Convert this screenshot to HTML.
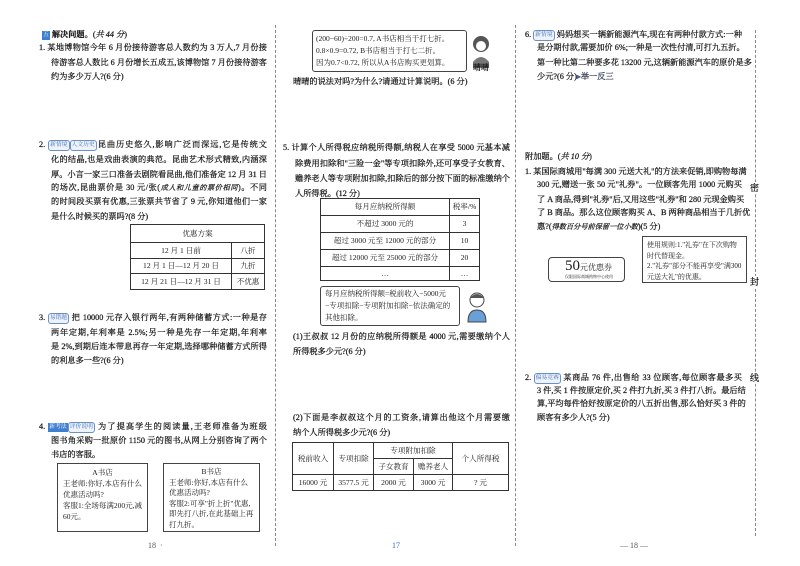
<!DOCTYPE html>
<html><head><meta charset="utf-8">
<style>
*{margin:0;padding:0;box-sizing:border-box}
body{width:800px;height:566px;background:#fff;position:relative;overflow:hidden;font-family:"Liberation Serif","Noto Serif CJK SC","Noto Sans CJK SC",serif;color:#1a1a1a;font-size:10px}
.l{position:absolute;white-space:nowrap;line-height:12px;font-size:8.2px;-webkit-text-stroke:0.25px #1a1a1a}
.j{text-align:justify;text-align-last:justify}
.s{font-size:7.2px}
.tag{display:inline-block;border:1px solid #6a8fc9;border-radius:3px;color:#3b6cb7;font-size:5.8px;line-height:9px;padding:0 1px;vertical-align:1px;background:#eef3fb;-webkit-text-stroke:0}
.tagb{display:inline-block;background:#3f7fcf;color:#fff;font-size:5.8px;line-height:9px;padding:0 1px;vertical-align:1px;-webkit-text-stroke:0}
.dl{position:absolute;top:25px;bottom:20px;border-left:1px dashed #888}
table{position:absolute;border-collapse:collapse;font-size:7.6px}
td{border:1px solid #333;text-align:center;padding:0;white-space:nowrap}
.box{position:absolute;border:1px solid #444;font-size:8px;line-height:11px;padding:3px 5px}
.pn{position:absolute;font-size:8px;color:#555}
</style></head><body>
<div class="dl" style="left:275px"></div>
<div class="dl" style="left:515px"></div>
<div class="dl" style="left:755px;top:30px;bottom:30px"></div>
<div class="l" style="left:750px;top:182px;font-size:9px;background:#fff">密</div>
<div class="l" style="left:750px;top:276px;font-size:9px;background:#fff">封</div>
<div class="l" style="left:750px;top:372px;font-size:9px;background:#fff">线</div>

<!-- column 1 -->
<div class="l" style="left:42px;top:29px"><span class="tagb">五</span> <b>解决问题。</b>(<i>共 44 分</i>)</div>
<div class="l j" style="left:39px;top:42px;width:228px">1. 某地博物馆今年 6 月份接待游客总人数约为 3 万人,7 月份接</div>
<div class="l j" style="left:51px;top:57px;width:216px">待游客总人数比 6 月份增长五成五,该博物馆 7 月份接待游客</div>
<div class="l" style="left:51px;top:71px">约为多少万人?(6 分)</div>

<div class="l j" style="left:39px;top:139px;width:228px">2. <span class="tag">新情境</span><span class="tag">人文历史</span>昆曲历史悠久,影响广泛而深远,它是传统文</div>
<div class="l j" style="left:51px;top:154px;width:216px">化的结晶,也是戏曲表演的典范。昆曲艺术形式精致,内涵深</div>
<div class="l j" style="left:51px;top:169px;width:216px">厚。小言一家三口准备去剧院看昆曲,他们准备定 12 月 31 日</div>
<div class="l j" style="left:51px;top:182px;width:216px">的场次,昆曲票价是 30 元/张(<i class="s">成人和儿童的票价相同</i>)。不同</div>
<div class="l j" style="left:51px;top:196px;width:216px">的时间段买票有优惠,三张票共节省了 9 元,你知道他们一家</div>
<div class="l" style="left:51px;top:211px">是什么时候买的票吗?(8 分)</div>
<table style="left:130px;top:224px;width:135px;height:66px">
<tr><td colspan="2" style="height:18px">优惠方案</td></tr>
<tr><td>12 月 1 日前</td><td style="width:33px">八折</td></tr>
<tr><td>12 月 1 日—12 月 20 日</td><td>九折</td></tr>
<tr><td>12 月 21 日—12 月 31 日</td><td>不优惠</td></tr>
</table>

<div class="l j" style="left:39px;top:312px;width:228px">3. <span class="tag">易错题</span> 把 10000 元存入银行两年,有两种储蓄方式:一种是存</div>
<div class="l j" style="left:51px;top:327px;width:216px">两年定期,年利率是 2.5%;另一种是先存一年定期,年利率</div>
<div class="l j" style="left:51px;top:341px;width:216px">是 2%,到期后连本带息再存一年定期,选择哪种储蓄方式所得</div>
<div class="l" style="left:51px;top:355px">的利息多一些?(6 分)</div>

<div class="l j" style="left:39px;top:421px;width:228px">4. <span class="tagb">新考法</span><span class="tag">评价说明</span> 为了提高学生的阅读量,王老师准备为班级</div>
<div class="l j" style="left:51px;top:435px;width:216px">图书角采购一批原价 1150 元的图书,从网上分别咨询了两个</div>
<div class="l" style="left:51px;top:449px">书店的客服。</div>
<div class="box" style="left:57px;top:463px;width:91px;height:69px;font-size:7.5px"><div style="text-align:center">A书店</div>王老师:你好,本店有什么优惠活动吗?<br>客服1:全场每满200元,减60元。</div>
<div class="box" style="left:163px;top:463px;width:97px;height:69px;font-size:7.5px;line-height:10.5px"><div style="text-align:center">B书店</div>王老师:你好,本店有什么优惠活动吗?<br>客服2:可享"折上折"优惠,即先打八折,在此基础上再打九折。</div>
<div class="pn" style="left:148px;top:541px">18 &nbsp;·</div>

<!-- column 2 -->
<div class="box" style="left:312px;top:30px;width:155px;height:42px;line-height:12px;padding:2px 3px;border-radius:3px;font-size:7.5px;white-space:nowrap">(200−60)÷200=0.7, A书店相当于打七折。<br>0.8×0.9=0.72, B书店相当于打七二折。<br>因为0.7&lt;0.72, 所以从A书店购买更划算。</div>
<svg style="position:absolute;left:468px;top:32px" width="26" height="40"><circle cx="13" cy="12" r="8" fill="#555"/><circle cx="13" cy="14" r="5" fill="#fff"/><path d="M5 30 Q13 20 21 30 L21 36 L5 36Z" fill="#777"/></svg>
<div class="l" style="left:473px;top:62px;font-size:8px">晴晴</div>
<div class="l" style="left:293px;top:76px">晴晴的说法对吗?为什么?请通过计算说明。(6 分)</div>

<div class="l j" style="left:283px;top:142px;width:227px">5. 计算个人所得税应纳税所得额,纳税人在享受 5000 元基本减</div>
<div class="l j" style="left:295px;top:158px;width:215px">除费用扣除和"三险一金"等专项扣除外,还可享受子女教育、</div>
<div class="l j" style="left:295px;top:173px;width:215px">赡养老人等专项附加扣除,扣除后的部分按下面的标准缴纳个</div>
<div class="l" style="left:295px;top:188px">人所得税。(12 分)</div>
<table style="left:320px;top:198px;width:160px;height:83px">
<tr><td>每月应纳税所得额</td><td style="width:30px">税率/%</td></tr>
<tr><td>不超过 3000 元的</td><td>3</td></tr>
<tr><td>超过 3000 元至 12000 元的部分</td><td>10</td></tr>
<tr><td>超过 12000 元至 25000 元的部分</td><td>20</td></tr>
<tr><td>…</td><td>…</td></tr>
</table>
<div class="box" style="left:320px;top:286px;width:140px;height:40px;line-height:12px;padding:1px 4px;border-radius:3px;font-size:7.5px">每月应纳税所得额=税前收入−5000元−专项扣除−专项附加扣除−依法确定的其他扣除。</div>
<svg style="position:absolute;left:464px;top:290px" width="26" height="34"><circle cx="13" cy="10" r="7" fill="#fff" stroke="#444"/><path d="M6 8 Q13 0 20 8" fill="#555"/><path d="M4 32 Q4 20 13 20 Q22 20 22 32Z" fill="#6aa0d8" stroke="#444"/></svg>
<div class="l j" style="left:293px;top:331px;width:217px">(1)王叔叔 12 月份的应纳税所得额是 4000 元,需要缴纳个人</div>
<div class="l" style="left:293px;top:346px">所得税多少元?(6 分)</div>
<div class="l j" style="left:293px;top:412px;width:217px">(2)下面是李叔叔这个月的工资条,请算出他这个月需要缴</div>
<div class="l" style="left:293px;top:427px">纳个人所得税多少元?(6 分)</div>
<table style="left:292px;top:442px;width:217px;height:49px">
<tr><td rowspan="2" style="width:41px">税前收入</td><td rowspan="2" style="width:40px">专项扣除</td><td colspan="2">专项附加扣除</td><td rowspan="2">个人所得税</td></tr>
<tr><td style="width:40px">子女教育</td><td style="width:39px">赡养老人</td></tr>
<tr><td>16000 元</td><td>3577.5 元</td><td>2000 元</td><td>3000 元</td><td>? 元</td></tr>
</table>
<div class="pn" style="left:392px;top:541px;color:#3b6cb7">17</div>

<!-- column 3 -->
<div class="l j" style="left:525px;top:29px;width:217px">6. <span class="tag">新情境</span> 妈妈想买一辆新能源汽车,现在有两种付款方式:一种</div>
<div class="l j" style="left:537px;top:42px;width:205px">是分期付款,需要加价 6%;一种是一次性付清,可打九五折。</div>
<div class="l j" style="left:537px;top:57px;width:205px">第一种比第二种要多花 13200 元,这辆新能源汽车的原价是多</div>
<div class="l" style="left:537px;top:71px">少元?(6 分)<span style="color:#3b6cb7">▸举一反三</span></div>

<div class="l" style="left:525px;top:151px">附加题。(<i>共 10 分</i>)</div>
<div class="l j" style="left:525px;top:166px;width:217px">1. 某国际商城用"每满 300 元送大礼"的方法来促销,即购物每满</div>
<div class="l j" style="left:537px;top:179px;width:205px">300 元,赠送一张 50 元"礼券"。一位顾客先用 1000 元购买</div>
<div class="l j" style="left:537px;top:194px;width:205px">了 A 商品,得到"礼券"后,又用这些"礼券"和 280 元现金购买</div>
<div class="l j" style="left:537px;top:207px;width:205px">了 B 商品。那么这位顾客购买 A、B 两种商品相当于几折优</div>
<div class="l" style="left:537px;top:221px">惠?(<i class="s">得数百分号前保留一位小数</i>)(5 分)</div>
<div class="box" style="left:548px;top:257px;width:77px;height:25px;border-radius:4px;padding:1px 4px 0 16px"><span style="font-size:15px;line-height:15px">50</span><span style="font-size:8px">元优惠券</span><div style="font-size:4px;line-height:5px">仅限国际商城购物中心使用</div></div>
<div class="box" style="left:642px;top:236px;width:105px;height:47px;line-height:10.5px;font-size:7px;padding:3px 4px">使用规则:1."礼券"在下次购物时代替现金。<br>2."礼券"部分不能再享受"满300元送大礼"的优惠。</div>

<div class="l j" style="left:525px;top:372px;width:217px">2. <span class="tag">偏易竞赛</span> 某商品 76 件,出售给 33 位顾客,每位顾客最多买</div>
<div class="l j" style="left:537px;top:385px;width:205px">3 件,买 1 件按原定价,买 2 件打九折,买 3 件打八折。最后结</div>
<div class="l j" style="left:537px;top:398px;width:205px">算,平均每件恰好按原定价的八五折出售,那么恰好买 3 件的</div>
<div class="l" style="left:537px;top:412px">顾客有多少人?(5 分)</div>
<div class="pn" style="left:620px;top:541px">— 18 —</div>
</body></html>
